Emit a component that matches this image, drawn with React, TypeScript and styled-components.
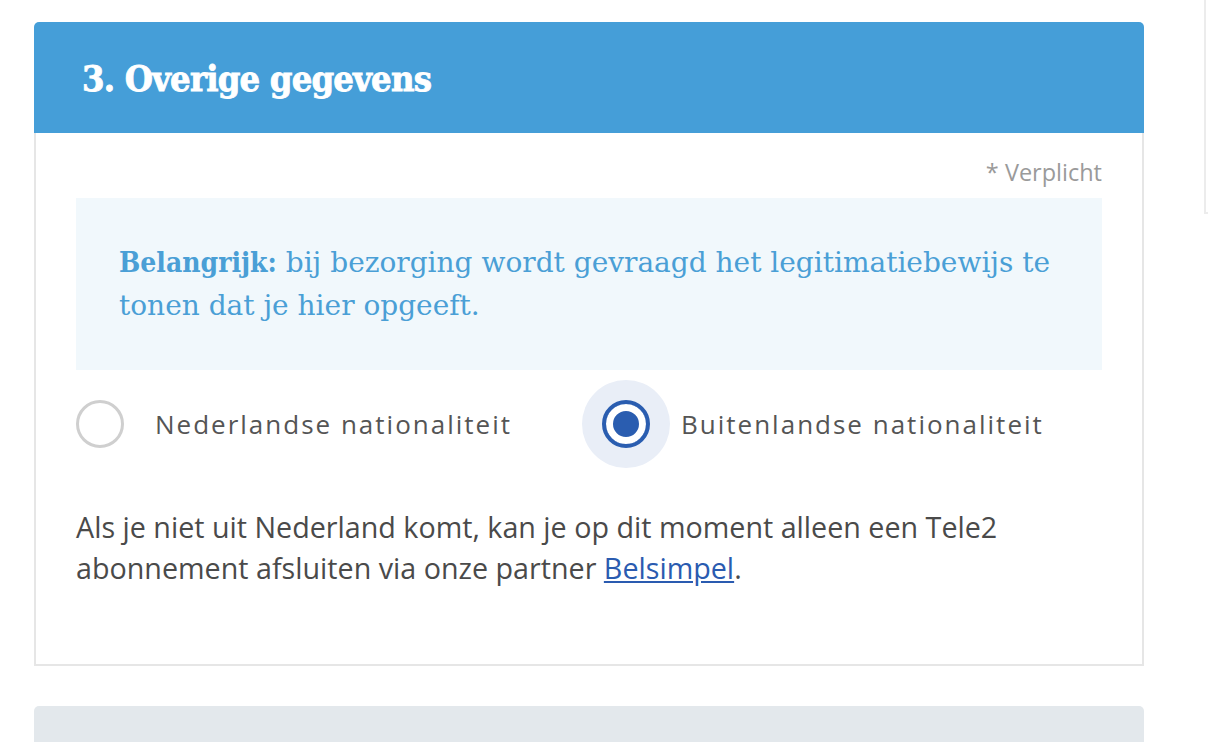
import React, {useState} from 'react';
import styled, {createGlobalStyle} from "styled-components";

const GlobalStyle = createGlobalStyle`
  body {
    margin: 0;
    background: #fff;
    font-family: "Open Sans", "Noto Sans", sans-serif;
  }
`

const options = [
  {id: 'nl', label: 'Nederlandse nationaliteit'},
  {id: 'foreign', label: 'Buitenlandse nationaliteit'}
]

const RadioOption = ({label, checked, onSelect}: { label: string, checked: boolean, onSelect: () => void }) => (
  <OptionLabel onClick={onSelect}>
    <RadioCircle checked={checked}/>
    <OptionText>{label}</OptionText>
  </OptionLabel>
)

export default function App() {
  const [nationality, setNationality] = useState('foreign')

  return (
    <>
      <GlobalStyle/>
      <Page>
        <Main>
          <Card>
            <CardHeader>
              <CardTitle>3. Overige gegevens</CardTitle>
            </CardHeader>
            <CardBody>
              <Required>* Verplicht</Required>
              <InfoBox>
                <strong>Belangrijk:</strong> bij bezorging wordt gevraagd het legitimatiebewijs te
                tonen dat je hier opgeeft.
              </InfoBox>
              <RadioRow>
                {options.map(option => (
                  <RadioOption key={option.id}
                               label={option.label}
                               checked={nationality === option.id}
                               onSelect={() => setNationality(option.id)}/>
                ))}
              </RadioRow>
              <Notice>
                Als je niet uit Nederland komt, kan je op dit moment alleen een Tele2
                abonnement afsluiten via onze partner <a href="#">Belsimpel</a>.
              </Notice>
            </CardBody>
          </Card>
          <NextCard/>
        </Main>
        <Aside/>
      </Page>
    </>
  );
}

const Page = styled.div`
  display: flex;
  align-items: flex-start;
  gap: 60px;
  padding: 22px 0 0 34px;
  height: 720px;
  overflow: hidden;
`

const Main = styled.main`
  width: 1110px;
  flex-shrink: 0;
`

const Aside = styled.aside`
  flex: 1;
  margin-top: -22px;
  height: 212px;
  border-left: 2px solid #ececec;
  border-bottom: 2px solid #ececec;
`

const Card = styled.section`
  display: flex;
  flex-direction: column;
`

const CardHeader = styled.header`
  height: 111px;
  display: flex;
  align-items: center;
  padding-left: 48px;
  background: #459ed8;
  border-radius: 5px 5px 0 0;
`

const CardTitle = styled.h2`
  margin: 0;
  color: #fff;
  font-family: "DejaVu Serif", "Liberation Serif", serif;
  font-stretch: condensed;
  font-weight: 700;
  font-size: 36px;
  letter-spacing: -0.8px;
  -webkit-text-stroke: 0.8px #fff;
`

const CardBody = styled.div`
  border: 2px solid #e6e6e6;
  border-top: none;
  padding: 24px 40px 76px 40px;
`

const Required = styled.div`
  text-align: right;
  color: #9a9a9a;
  font-size: 23.5px;
  line-height: 30px;
`

const InfoBox = styled.div`
  margin-top: 11px;
  padding: 43px 28px 43px 43px;
  background: #f1f8fc;
  color: #4a9fd6;
  font-family: "DejaVu Serif", "Liberation Serif", serif;
  font-size: 28px;
  line-height: 43px;

  strong {
    font-weight: 700;
    font-stretch: condensed;
  }
`

const RadioRow = styled.div`
  display: flex;
  align-items: center;
  gap: 90px;
  height: 88px;
  margin-top: 10px;
`

const OptionLabel = styled.label`
  display: flex;
  align-items: center;
  gap: 31px;
  cursor: pointer;
`

const RadioCircle = styled.span<{ checked: boolean }>`
  box-sizing: border-box;
  width: 48px;
  height: 48px;
  flex-shrink: 0;
  border-radius: 50%;
  background: #fff;
  border: ${props => props.checked ? '4px solid #2a5db0' : '3px solid #cfcfcf'};
  box-shadow: ${props => props.checked
          ? 'inset 0 0 0 7px #fff, inset 0 0 0 20px #2a5db0, 0 0 0 20px #e9eef7'
          : 'none'};
`

const OptionText = styled.span`
  color: #555;
  font-size: 26px;
  letter-spacing: 2px;
`

const Notice = styled.p`
  margin: 38px 0 0 0;
  color: #4a4a4a;
  font-size: 28.7px;
  line-height: 41px;

  a {
    color: #2a5bb0;
  }
`

const NextCard = styled.div`
  margin-top: 40px;
  height: 60px;
  background: #e3e8ec;
  border-radius: 5px 5px 0 0;
`
